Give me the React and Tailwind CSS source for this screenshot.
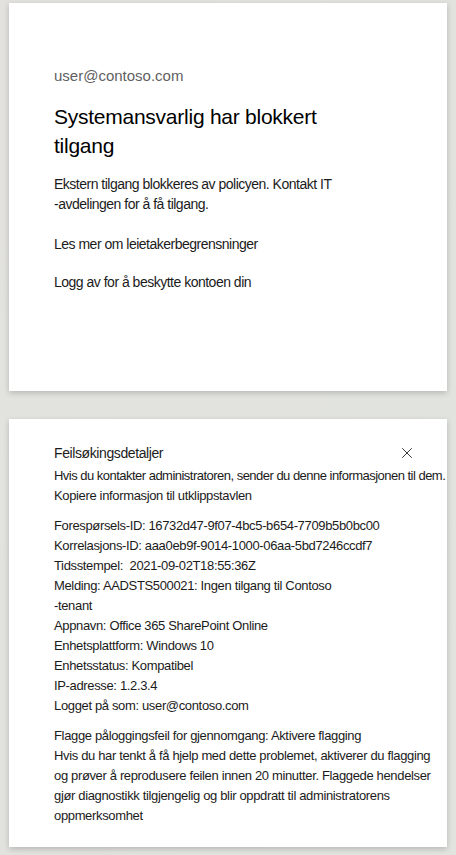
import { X } from 'lucide-react';

const details = [
  'Forespørsels-ID: 16732d47-9f07-4bc5-b654-7709b5b0bc00',
  'Korrelasjons-ID: aaa0eb9f-9014-1000-06aa-5bd7246ccdf7',
  'Tidsstempel:  2021-09-02T18:55:36Z',
  'Melding: AADSTS500021: Ingen tilgang til Contoso',
  '-tenant',
  'Appnavn: Office 365 SharePoint Online',
  'Enhetsplattform: Windows 10',
  'Enhetsstatus: Kompatibel',
  'IP-adresse: 1.2.3.4',
  'Logget på som: user@contoso.com',
];

const flagging = [
  'Hvis du har tenkt å få hjelp med dette problemet, aktiverer du flagging',
  'og prøver å reprodusere feilen innen 20 minutter. Flaggede hendelser',
  'gjør diagnostikk tilgjengelig og blir oppdratt til administratorens',
  'oppmerksomhet',
];

export default function App() {
  return (
    <div
      className="min-h-[855px] w-[456px] bg-gradient-to-br from-[#e3e2df] to-[#e1e4df] pt-[3px] pb-2 text-[#1b1b1b]"
      style={{ fontFamily: '"Liberation Sans", Arial, sans-serif' }}
    >
      <div className="mx-[9px] h-[388px] bg-white px-[45px] pt-[63px] shadow-[0_2px_6px_rgba(0,0,0,0.2)]">
        <div className="text-[15px] leading-[20px] text-[#5f5f5f]">user@contoso.com</div>
        <h1 className="mt-[16px] w-[290px] text-[21px] leading-[29px] font-normal tracking-[-0.25px] text-black">
          Systemansvarlig har blokkert tilgang
        </h1>
        <p className="mt-[14px] text-[14px] leading-[20px] tracking-[-0.5px]">
          Ekstern tilgang blokkeres av policyen. Kontakt IT
          <br />
          -avdelingen for å få tilgang.
        </p>
        <p className="mt-[20px] text-[14px] leading-[20px] tracking-[-0.5px]">
          Les mer om leietakerbegrensninger
        </p>
        <p className="mt-[18px] text-[14px] leading-[20px] tracking-[-0.5px]">
          Logg av for å beskytte kontoen din
        </p>
      </div>

      <div className="mx-[9px] mt-[28px] h-[428px] bg-white pl-[45px] pr-[10px] pt-[24px] shadow-[0_2px_6px_rgba(0,0,0,0.2)]">
        <div className="flex w-[362px] items-center justify-between">
          <div className="text-[14px] leading-[20px] tracking-[-0.4px]">Feilsøkingsdetaljer</div>
          <X className="h-[18px] w-[18px] text-[#333]" strokeWidth={1.3} />
        </div>
        <div className="mt-[3px] whitespace-nowrap text-[13px] leading-[20px] tracking-[-0.35px]">
          <p className="tracking-[-0.52px]">
            Hvis du kontakter administratoren, sender du denne informasjonen til dem.
          </p>
          <p>Kopiere informasjon til utklippstavlen</p>
          <div className="mt-[10px]">
            {details.map((line) => (
              <p key={line} className="whitespace-pre">{line}</p>
            ))}
          </div>
          <div className="mt-[10px]">
            <p>Flagge påloggingsfeil for gjennomgang: Aktivere flagging</p>
            {flagging.map((line) => (
              <p key={line}>{line}</p>
            ))}
          </div>
        </div>
      </div>
    </div>
  );
}
